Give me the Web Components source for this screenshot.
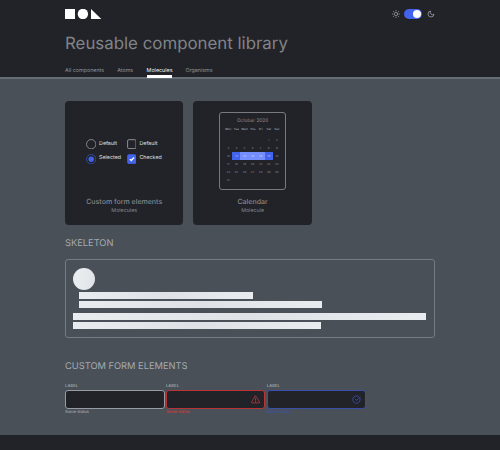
<!DOCTYPE html>
<html lang="en"><head><meta charset="utf-8"><title>Reusable component library</title>
<style>html,body{margin:0}body{font-family:Inter,"Liberation Sans",sans-serif;text-rendering:geometricPrecision;background:#495057;width:500px;height:450px;overflow:hidden}</style></head>
<body><mol-app></mol-app>
<script>
const define = (name, render) => customElements.define(name, class extends HTMLElement {
  connectedCallback() {
    if (this.shadowRoot) return;
    this.attachShadow({mode: 'open'}).innerHTML = '<style>*{box-sizing:border-box}:host{display:block;box-sizing:border-box}</style>' + render(this);
  }
});

define('mol-logo', () => `<style>:host{height:10px}svg{display:block}</style>
<svg width="37" height="10" viewBox="0 0 37 10" fill="#fff"><path d="M0 0h10v10H0z"/><circle cx="17.9" cy="5" r="5.2"/><path d="M26 0l10.3 10H26z"/></svg>`);

define('theme-switch', () => `<style>:host{display:flex;align-items:center;height:10px}
.t{width:18px;height:10px;border-radius:5px;background:#4263eb;margin:0 5px 0 4px;padding:1px;display:flex;justify-content:flex-end}
.t i{width:8px;height:8px;border-radius:50%;background:#fff}svg{display:block}</style>
<svg width="8" height="8" viewBox="0 0 24 24" fill="none" stroke="#a6acb2" stroke-width="2" stroke-linecap="round"><circle cx="12" cy="12" r="5"/><path d="M12 1v2M12 21v2M4.2 4.2l1.4 1.4M18.4 18.4l1.4 1.4M1 12h2M21 12h2M4.2 19.8l1.4-1.4M18.4 5.6l1.4-1.4"/></svg>
<span class="t"><i></i></span>
<svg width="8" height="8" viewBox="0 0 24 24" fill="none" stroke="#a6acb2" stroke-width="2.2" stroke-linejoin="round"><path d="M21 12.8A9 9 0 1 1 11.2 3a7 7 0 0 0 9.8 9.8z"/></svg>`);

define('nav-tab', el => `<style>:host{height:16px;padding-top:5px;font-size:5.35px;line-height:8px;color:#919499;white-space:nowrap;width:${el.getAttribute('w')}px}
:host([active]){color:#f1f3f5;border-bottom:3px solid #fff}</style><slot></slot>`);

define('mol-header', () => `<style>:host{height:79px;padding:9px 65px 0;background:#222328;border-bottom:2px solid #656d74;color:#808388}
.top{display:flex;justify-content:space-between}h1{margin:15px 0 0;font-size:16.85px;line-height:20px;font-weight:400}
nav{display:flex;margin-top:8px;gap:13.4px}</style>
<div class="top"><mol-logo></mol-logo><theme-switch></theme-switch></div><h1>Reusable component library</h1>
<nav><nav-tab w="38.8">All components</nav-tab><nav-tab w="16">Atoms</nav-tab><nav-tab w="25.6" active>Molecules</nav-tab><nav-tab w="27">Organisms</nav-tab></nav>`);

define('component-card', () => `<style>:host{width:118.4px;height:124px;border-radius:4px;background:#222328;text-align:center;color:#8b8e93}
.p{height:96px;display:flex;justify-content:center}.n{font-size:7px;line-height:10px;font-weight:500;color:#85888d}.k{font-size:5.3px;line-height:8px;color:#85888d}</style>
<div class="p"><slot></slot></div><div class="n"><slot name="title"></slot></div><div class="k"><slot name="kind"></slot></div>`);

define('choice-item', el => {
  const radio = el.hasAttribute('radio'), on = el.hasAttribute('on');
  const icon = radio
    ? `<circle cx="5.2" cy="5.2" r="4.7" stroke="${on ? '#3550ba' : '#9a9da2'}"/>` + (on ? '<circle cx="5.2" cy="5.2" r="2.7" fill="#4263eb"/>' : '')
    : `<rect x=".6" y=".7" width="8.4" height="8.9" rx="1.2" stroke="${on ? '#4263eb' : '#a6a9ae'}" fill="${on ? '#4263eb' : 'none'}"/>` + (on ? '<path d="M2.9 5.1l1.3 1.4 2.9-3" stroke="#fff" stroke-width="1.3"/>' : '');
  return `<style>:host{display:flex;align-items:center;gap:3px;height:10.4px;font-size:5.3px;line-height:8px;color:#dee2e6;white-space:nowrap}svg{display:block;flex:none}span{margin-top:-1px}</style>
<svg width="${radio ? 10.4 : 9.8}" height="10.4" fill="none" stroke-width=".8">${icon}</svg><span><slot></slot></span>`;
});

define('form-preview', () => `<style>:host{display:grid;grid-template-columns:41px 38px;row-gap:4.2px;align-content:start;padding:37.6px 0 0 2px}</style>
<choice-item radio>Default</choice-item><choice-item>Default</choice-item><choice-item radio on>Selected</choice-item><choice-item on>Checked</choice-item>`);

define('mini-calendar', () => {
  let cells = ['Mon','Tue','Wed','Thu','Fri','Sat','Sun'].map(d => `<b>${d}</b>`).join('') + '<i></i>'.repeat(5);
  for (let d = 1; d <= 31; d++) cells += `<i class="${d === 11 || d === 15 ? 'e' : d > 11 && d < 15 ? 'm' : ''}">${d}</i>`;
  return `<style>:host{width:67px;height:78px;margin-top:11px;border:1px solid #777b80;border-radius:3px;padding-top:3.6px}
h4{margin:0;font-weight:400;font-size:4.75px;line-height:8px;color:#8f9297}
.g{display:grid;grid-template-columns:repeat(7,8.1px);grid-template-rows:10.5px repeat(6,8.1px);justify-content:center;margin-top:.4px}
i,b{font-style:normal;font-weight:500;font-size:2.9px;line-height:8.1px;color:#7a7d83}b{color:#a0a3a8;font-size:2.9px}
.e{background:#4263eb;color:#b8c5ff}.m{background:#748ffc;color:#c5d0ff}</style><h4>October 2020</h4><div class="g">${cells}</div>`;
});

define('section-title', () => `<style>:host{font-size:9.3px;line-height:12px;color:#a5abb1}</style><slot></slot>`);

define('skeleton-box', () => `<style>:host{height:79px;border:1px solid #747c83;border-radius:3px;padding:7.5px 7.3px 0}
.b{background:linear-gradient(100deg,#e9ecef,#dee2e6 50%,#e9ecef);height:7px}
.c{width:22px;height:22px;border-radius:50%;background:linear-gradient(100deg,#e9ecef 35%,#dee2e6)}</style>
<div class="c"></div><div class="b" style="width:173.9px;margin:2.5px 0 0 5.6px"></div><div class="b" style="width:243.1px;margin:2px 0 0 5.6px"></div>
<div class="b" style="width:353.2px;margin-top:5px"></div><div class="b" style="width:247.4px;margin-top:2px"></div>`);

define('text-field', el => {
  const s = el.getAttribute('state');
  const c = {error: '#b83439', ok: '#3b4ea8'}[s] || '#969ca2', t = {error: '#f03030', ok: '#3d52c5'}[s] || '#b8bdc2';
  const icon = {error: '<path d="M10.3 3.9L1.8 18a2 2 0 0 0 1.7 3h17a2 2 0 0 0 1.7-3L13.7 3.9a2 2 0 0 0-3.4 0zM12 9v5M12 16.6v1.2"/>',
    ok: '<path d="M21.6 9.5A10 10 0 1 1 17 3.4M21.5 5L12 14.5l-3.5-3.5"/>'}[s];
  return `<style>:host{width:99.6px;font-size:4.1px;color:#b8bdc2}
.f{height:19px;border:1px solid ${c};border-radius:3px;background:#222328;display:flex;align-items:center;justify-content:flex-end;padding-right:4.5px}
.s{color:${t};line-height:5px}.l{height:7px;line-height:8px;font-size:4.3px}</style><div class="l"><slot></slot></div>
<div class="f">${icon ? `<svg width="9" height="9" viewBox="0 0 24 24" fill="none" stroke="${c}" stroke-width="2.3" stroke-linecap="round" stroke-linejoin="round">${icon}</svg>` : ''}</div><div class="s">Some status</div>`;
});

define('mol-app', () => `<style>:host{height:450px;display:flex;flex-direction:column}main{height:356px;flex:none;padding:22.4px 65px 0}
.cards{display:flex;gap:10px}.one{margin:12.4px 0 9.6px}.two{margin:22.4px 0 9.8px}.fields{display:flex;gap:1.3px}footer{flex:1;background:#222328}</style>
<mol-header></mol-header><main><div class="cards">
<component-card><form-preview></form-preview><span slot="title">Custom form elements</span><span slot="kind">Molecules</span></component-card>
<component-card><mini-calendar></mini-calendar><span slot="title">Calendar</span><span slot="kind">Molecule</span></component-card></div>
<section-title class="one">SKELETON</section-title><skeleton-box></skeleton-box>
<section-title class="two">CUSTOM FORM ELEMENTS</section-title>
<div class="fields"><text-field>LABEL</text-field><text-field state="error">LABEL</text-field><text-field state="ok">LABEL</text-field></div></main><footer></footer>`);
</script></body></html>
